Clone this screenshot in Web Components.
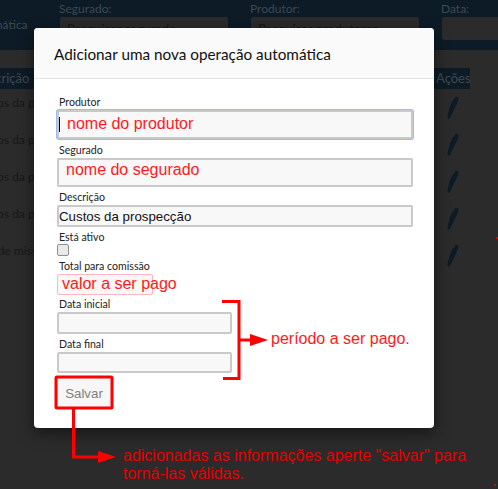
<!DOCTYPE html>
<html lang="pt">
<head>
<meta charset="utf-8">
<title>Operações automáticas</title>
<style>
  html, body { margin: 0; height: 489px; overflow: hidden; background: #2b2b2b; }
  body { position: relative; font-family: Lato, "Noto Sans", sans-serif; }
</style>
</head>
<body>
<filter-bar></filter-bar>
<operations-table></operations-table>

<operation-modal heading="Adicionar uma nova operação automática">
  <form-field label="Produtor" height="29" focused style="margin-bottom:3px;--hint-left:7px;--hint-top:-1px"><red-hint>nome do produtor</red-hint></form-field>
  <form-field label="Segurado" height="29" style="--hint-left:7px;--hint-top:-6px"><red-hint>nome do segurado</red-hint></form-field>
  <form-field label="Descrição" height="22" value="Custos da prospecção"></form-field>
  <check-field label="Está ativo"></check-field>
  <form-field label="Total para comissão" height="21" width="96" pink style="margin-bottom:1px;--hint-left:4px;--hint-top:-1px"><red-hint>valor a ser pago</red-hint></form-field>
  <form-field label="Data inicial" height="22" width="175"></form-field>
  <form-field label="Data final" height="21" width="175"></form-field>
  <save-button>Salvar</save-button>
</operation-modal>

<help-marks></help-marks>

<script>
class FilterBar extends HTMLElement {
  constructor() {
    super();
    this.attachShadow({ mode: 'open' });
  }

  connectedCallback() {
    this.shadowRoot.innerHTML = `
      <style>
        :host {
          display: grid;
          grid-template-columns: 59px 191px 191px 1fr;
          height: 50px;
          background: #0c1b26;
          color: #3c4a52;
          font-size: 12px;
          overflow: hidden;
        }
        .title { padding-top: 17px; text-indent: -31px; white-space: nowrap; overflow: hidden; }
        label { display: block; padding-top: 2px; line-height: 14px; }
        .box {
          box-sizing: border-box;
          margin: 1px 0 0 1px;
          width: 168px;
          height: 23px;
          padding: 4px 7px 0;
          background: #2b2b2b;
          border-radius: 2px;
          color: #161616;
          font-size: 13px;
          white-space: nowrap;
        }
        .date { width: 60px; }
      </style>
      <div class="title">automática</div>
      <div><label>Segurado:</label><div class="box">Pesquisar segurado</div></div>
      <div><label>Produtor:</label><div class="box">Pesquisar produtores</div></div>
      <div><label>Data:</label><div class="box date"></div></div>
    `;
  }
}

class OperationsTable extends HTMLElement {
  constructor() {
    super();
    this.attachShadow({ mode: 'open' });
    this._rows = [
      'Custos da prospecção',
      'Custos da prospecção',
      'Custos da prospecção',
      'Custos da prospecção',
      'Taxa de missão',
    ];
  }

  connectedCallback() {
    const pen = `
      <svg width="12" height="23" viewBox="0 0 12 23">
        <path d="M8.6.6 11.6 1.6 11 5 9.6 8.6 2.6 22.4 1 22.6.5 20 3 10.5 5.6 4.6 7.4 3.2Z" fill="#0c1b26"/>
      </svg>`;
    const rows = this._rows
      .map((text) => `<div class="row"><span class="text">${text}</span><span class="icon">${pen}</span></div>`)
      .join('');
    this.shadowRoot.innerHTML = `
      <style>
        :host { display: block; padding-top: 18px; color: #171717; font-size: 12px; }
        .row, .head { display: grid; grid-template-columns: 436px 34px; }
        .head {
          width: 470px;
          height: 21px;
          background: #0c1b26;
          color: #3c4a52;
          font-size: 13px;
          line-height: 21px;
        }
        .head b { font-weight: 400; text-align: center; }
        .head span { text-indent: -27px; white-space: nowrap; overflow: hidden; }
        .row { height: 37px; }
        .text { padding-top: 6px; text-indent: -27px; white-space: nowrap; overflow: hidden; }
        .row:last-child .text { text-indent: -29px; }
        .icon { padding: 7px 0 0 11px; }
      </style>
      <div class="head"><span>Descrição</span><b>Ações</b></div>
      <div class="rows">${rows}</div>
    `;
  }
}

class OperationModal extends HTMLElement {
  constructor() {
    super();
    this.attachShadow({ mode: 'open' });
  }

  connectedCallback() {
    this.shadowRoot.innerHTML = `
      <style>
        :host {
          position: absolute;
          left: 34px;
          top: 28px;
          width: 400px;
          height: 400px;
          background: #fff;
          border-radius: 4px;
          box-shadow: 0 5px 15px rgba(0, 0, 0, 0.5);
          overflow: hidden;
        }
        header {
          box-sizing: border-box;
          height: 51px;
          padding: 15px 20px 0;
          background: #fafafa;
          border-bottom: 1px solid #e5e5e5;
          color: #111;
          font-size: 15.3px;
          line-height: 22px;
        }
        main { padding: 15px 21px 0 23px; display: flex; flex-direction: column; }
      </style>
      <header>${this.getAttribute('heading')}</header>
      <main><slot></slot></main>
    `;
  }
}

class FormField extends HTMLElement {
  constructor() {
    super();
    this.attachShadow({ mode: 'open' });
  }

  connectedCallback() {
    const height = this.getAttribute('height');
    const width = this.getAttribute('width');
    const focused = this.hasAttribute('focused');
    const pink = this.hasAttribute('pink');
    this.shadowRoot.innerHTML = `
      <style>
        :host { display: block; margin-bottom: 2px; }
        label { display: block; padding-left: 2px; height: 16px; line-height: 16px; font-size: 10.6px; color: #222; }
        .box {
          box-sizing: border-box;
          display: flex;
          align-items: center;
          width: ${width ? width + 'px' : '100%'};
          height: ${height}px;
          background: #f8f8f8;
          border: 2px solid #c9c9c9;
          border-radius: 2px;
          color: #111;
          font-family: "Liberation Sans", sans-serif;
          font-size: 13.3px;
          white-space: nowrap;
        }
        .focused { box-shadow: 0 0 0 1px #9dbcf2; }
        .pink { border: 1px solid #fbb7bd; background: #f9f6f6; }
        .caret { width: 1px; height: 15px; background: #000; }
        slot { display: block; margin: var(--hint-top, 0) 0 0 var(--hint-left, 0); }
      </style>
      <label>${this.getAttribute('label')}</label>
      <div class="box ${focused ? 'focused' : ''} ${pink ? 'pink' : ''}">
        ${focused ? '<span class="caret"></span>' : ''}
        ${this.getAttribute('value') || ''}
        <slot></slot>
      </div>
    `;
  }
}

class RedHint extends HTMLElement {
  constructor() {
    super();
    this.attachShadow({ mode: 'open' });
    this.shadowRoot.innerHTML = `
      <style>
        :host { display: inline-block; color: #ff1a22; font: 16px "Liberation Sans", sans-serif; }
      </style>
      <slot></slot>
    `;
  }
}

class CheckField extends HTMLElement {
  constructor() {
    super();
    this.attachShadow({ mode: 'open' });
  }

  connectedCallback() {
    this.shadowRoot.innerHTML = `
      <style>
        :host { display: block; height: 29px; }
        label { display: block; padding-left: 2px; height: 15px; line-height: 16px; font-size: 10.6px; color: #222; }
        i {
          display: block;
          box-sizing: border-box;
          width: 12px;
          height: 12px;
          background: #e9e9e9;
          border: 1px solid #8f8f8f;
          border-radius: 2px;
        }
      </style>
      <label>${this.getAttribute('label')}</label>
      <i></i>
    `;
  }
}

class SaveButton extends HTMLElement {
  constructor() {
    super();
    this.attachShadow({ mode: 'open' });
    this.shadowRoot.innerHTML = `
      <style>
        :host { display: block; width: 56px; margin-top: 2px; }
        button {
          display: block;
          width: 56px;
          height: 31px;
          padding: 1px 2px 0 0;
          background: #f7f7f7;
          border: 0;
          color: #808080;
          font: 13.3px "Liberation Sans", sans-serif;
        }
      </style>
      <button><slot></slot></button>
    `;
  }
}

class HelpMarks extends HTMLElement {
  constructor() {
    super();
    this.attachShadow({ mode: 'open' });
    this.shadowRoot.innerHTML = `
      <style>
        :host { position: absolute; inset: 0; display: block; font: 16px "Liberation Sans", sans-serif; color: #ff1a22; }
        svg { position: absolute; left: 0; top: 0; }
        p { position: absolute; margin: 0; white-space: nowrap; line-height: 18px; }
        .period { left: 271px; top: 330px; }
        .tip { left: 123px; top: 447px; font-size: 16px; color: #e40000; }
      </style>
      <svg width="498" height="489" viewBox="0 0 498 489" fill="none" stroke="#ff0000" stroke-width="3">
        <path d="M222 301.5H239V378.5H223"/>
        <path d="M239 340H252"/>
        <path d="M250 334 268 340 250 346Z" fill="#ff0000" stroke="none"/>
        <rect x="56" y="377" width="56" height="31" rx="1"/>
        <path d="M73.5 408V457H100"/>
        <path d="M98 451 116 457 98 463Z" fill="#ff0000" stroke="none"/>
        <circle cx="497" cy="238" r="1" fill="#ff0000" stroke="none"/>
        <circle cx="495" cy="485" r="1" fill="#ff0000" stroke="none"/>
      </svg>
      <p class="period">período a ser pago.</p>
      <p class="tip">adicionadas as informações aperte "salvar" para<br>torná-las válidas.</p>
    `;
  }
}

customElements.define('filter-bar', FilterBar);
customElements.define('operations-table', OperationsTable);
customElements.define('operation-modal', OperationModal);
customElements.define('form-field', FormField);
customElements.define('red-hint', RedHint);
customElements.define('check-field', CheckField);
customElements.define('save-button', SaveButton);
customElements.define('help-marks', HelpMarks);
</script>
</body>
</html>
